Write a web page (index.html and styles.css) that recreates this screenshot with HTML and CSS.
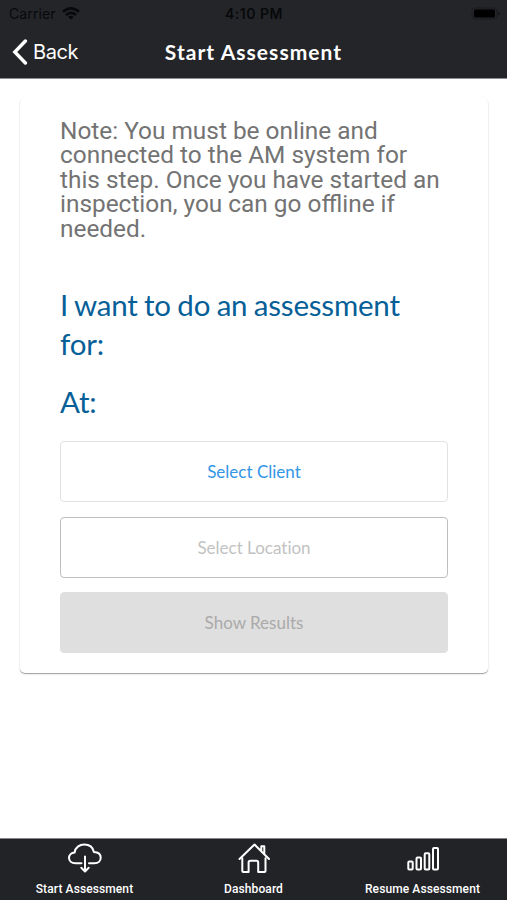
FILE: index.html
```html
<!DOCTYPE html>
<html lang="en">
<head>
<meta charset="utf-8">
<meta name="viewport" content="width=device-width, initial-scale=1">
<title>Start Assessment</title>
<link rel="stylesheet" href="styles.css">
</head>
<body>
<div class="app">
  <header class="header">
    <div class="status">
      <div class="carrier"><span>Carrier</span>
        <svg class="wifi" viewBox="0 0 18 13" width="18" height="13" fill="none" stroke="currentColor" stroke-width="2.5"><path d="M1 4.8Q9-2 17 4.8M4 8Q9 3.8 14 8"/><path d="M9 12.6 6.2 9.9Q9 7.7 11.8 9.9Z" fill="currentColor" stroke="none"/></svg>
      </div>
      <time class="clock">4:10 PM</time>
      <svg class="battery" viewBox="0 0 30 13" width="30" height="13"><rect x="1" y="1" width="25" height="11" rx="3" fill="none" stroke="#191a1d"/><rect x="3" y="2.5" width="21" height="8" rx="1.5" fill="#000"/><path d="M28 5v3" stroke="#15161a" stroke-width="1.5"/></svg>
    </div>
    <div class="navbar">
      <a class="back"><svg viewBox="0 0 16 26" width="16" height="26" fill="none" stroke="#fff" stroke-width="3.4" stroke-linecap="round" stroke-linejoin="miter"><path d="M13.4 2 2.8 13l10.6 11"/></svg><span>Back</span></a>
      <h1 class="title">Start Assessment</h1>
    </div>
  </header>
  <main class="content">
    <section class="card">
      <p class="note">Note: You must be online and<br>connected to the AM system for<br>this step. Once you have started an<br>inspection, you can go offline if<br>needed.</p>
      <h2 class="prompt">I want to do an assessment<br>for:</h2>
      <h2 class="prompt at">At:</h2>
      <div class="actions">
        <button class="btn client">Select Client</button>
        <button class="btn location" disabled>Select Location</button>
        <button class="btn results" disabled>Show Results</button>
      </div>
    </section>
  </main>
  <nav class="tabs">
    <a class="tab"><svg viewBox="0 0 36 32" width="36" height="32" fill="none" stroke="#fff" stroke-width="2" stroke-linecap="round" stroke-linejoin="round"><path d="M14.5 22.3H8.500C4.500 22.300 2 20 2 17.100c0-3.100 2.300-5.500 5.700-5.700C8.200 6.500 12.500 3.600 17.300 3.600c5 0 8.600 2.800 9.600 7.400 4.300.2 6.800 2.400 6.800 5.700 0 3.300-2.600 5.600-6.200 5.600h-5.500"/><path d="M18 15.500v14.500M14.300 26.800l3.700 3.700 3.700-3.700"/></svg><span>Start Assessment</span></a>
    <a class="tab"><svg viewBox="0 0 36 32" width="36" height="32" fill="none" stroke="#fff" stroke-width="2" stroke-linejoin="round" stroke-linecap="round"><path d="M6.300 17.200v12.700q0 1.100 1.100 1.100h5.200V21.500q0-1.700 1.700-1.700h6.200q1.700 0 1.700 1.700V31h6.200q1.100 0 1.100-1.100V17.200"/><path d="M3.500 18 18.500 3.500 33 18M25.300 10.200V5.200h3v7.800"/></svg><span>Dashboard</span></a>
    <a class="tab"><svg viewBox="0 0 36 32" width="36" height="32" fill="none" stroke="#fff" stroke-width="2"><rect x="3.300" y="20.600" width="4.400" height="7.800" rx="1"/><rect x="11.500" y="16.500" width="4.500" height="11.900" rx="1"/><rect x="19.700" y="12.300" width="4.600" height="16.100" rx="1"/><rect x="28" y="7" width="5" height="21.400" rx="1"/></svg><span>Resume Assessment</span></a>
  </nav>
</div>
</body>
</html>
```

FILE: styles.css
```css
* { box-sizing: border-box; }
body { margin: 0; background: #fff; font-family: Lato, sans-serif; }
.app { height: 900px; display: flex; flex-direction: column; }
.header { height: 79px; background: #242529; border-bottom: 1px solid #8b8c90; }
.status { height: 27px; padding: 0 6px 0 9px; display: grid; grid-template-columns: 1fr auto 1fr; align-items: center; font-family: Inter, sans-serif; font-size: 14px; color: #08090b; }
.carrier { display: flex; align-items: center; gap: 6px; letter-spacing: .1px; }
.clock { font-weight: 600; letter-spacing: .5px; margin-left: -2px; }
.battery { justify-self: end; }
.navbar { height: 50px; padding: 0 12px; display: grid; grid-template-columns: 1fr auto 1fr; align-items: center; color: #fff; }
.back { display: flex; align-items: center; gap: 5px; font: 20px/26px Inter, sans-serif; letter-spacing: -.4px; }
.title { margin: 0; font-size: 21px; line-height: 26px; font-weight: 700; letter-spacing: 1.05px; }
.content { flex: 1; padding: 19px 19px 0 20px; }
.card { height: 575px; padding: 21px 40px 0; background: #fff; border-radius: 5px; box-shadow: 0 1px 1px rgba(0,0,0,.34), 0 1px 3px rgba(0,0,0,.08); }
.note { margin: 0; font: 24.4px/24.4px Roboto, sans-serif; color: #737373; white-space: nowrap; }
.prompt { margin: 44px 0 0; font-size: 29.5px; line-height: 39px; font-weight: 400; letter-spacing: -.2px; word-spacing: -.9px; color: #075f98; white-space: nowrap; }
.prompt.at { margin-top: 19px; }
.actions { display: grid; gap: 14.6px; margin-top: 20px; }
.btn { height: 61px; border-radius: 4px; border: 1px solid #e2e2e2; background: #fff; padding: 0; font: 17px Lato, sans-serif; font-variant-ligatures: none; }
.client { color: #3296e6; }
.location { color: #c2c2c2; border-color: #bebebe; }
.results { color: #aaa; background: #dfdfdf; border-color: #dfdfdf; }
.tabs { height: 62px; background: #222327; border-top: 1px solid #85868a; display: grid; grid-template-columns: repeat(3, 1fr); }
.tab { display: flex; flex-direction: column; align-items: center; padding-top: 2px; font: 500 12px/16px Roboto, sans-serif; letter-spacing: .1px; color: #fff; white-space: nowrap; }
.tab span { margin-top: 8px; }
```
